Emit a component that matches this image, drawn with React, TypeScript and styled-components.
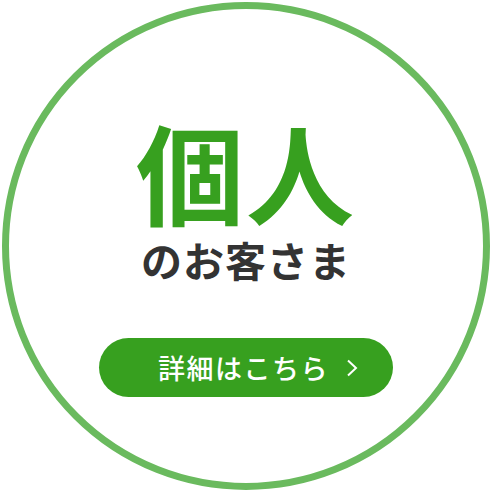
import styled, { createGlobalStyle } from 'styled-components';

const GlobalStyle = createGlobalStyle`
  html, body {
    margin: 0;
    padding: 0;
    background: #ffffff;
  }
  body {
    font-family: "Noto Sans CJK JP", "Noto Sans", sans-serif;
  }
`;

const Page = styled.div`
  width: 492px;
  height: 492px;
  display: flex;
  align-items: center;
  justify-content: center;
`;

const Circle = styled.div`
  box-sizing: border-box;
  width: 488px;
  height: 488px;
  border-radius: 50%;
  border: 7px solid #6aba5e;
  background: #ffffff;
  display: flex;
  flex-direction: column;
  align-items: center;
  padding-top: 107px;
`;

const Title = styled.h1`
  margin: 0;
  font-size: 108px;
  line-height: 1;
  font-weight: 700;
  color: #37a01f;
  letter-spacing: 2px;
`;

const Subtitle = styled.p`
  margin: 11px 0 0;
  font-size: 41px;
  line-height: 1.2;
  font-weight: 700;
  color: #333333;
  letter-spacing: 1px;
`;

const DetailButton = styled.a`
  margin-top: 54px;
  box-sizing: border-box;
  width: 294px;
  height: 59px;
  border-radius: 30px;
  background: #37a01f;
  color: #ffffff;
  display: flex;
  align-items: center;
  justify-content: center;
  gap: 17px;
  padding-left: 24px;
  text-decoration: none;
  font-size: 27px;
  font-weight: 500;
  letter-spacing: 1.5px;
`;

const Chevron = styled.svg`
  width: 12px;
  height: 18px;
`;

export default function App() {
  return (
    <>
      <GlobalStyle />
      <Page>
        <Circle>
          <Title>個人</Title>
          <Subtitle>のお客さま</Subtitle>
          <DetailButton href="#">
            詳細はこちら
            <Chevron viewBox="0 0 12 18">
              <path d="M2 1.5 L10 9 L2 16.5" fill="none" stroke="#ffffff" strokeWidth="2" />
            </Chevron>
          </DetailButton>
        </Circle>
      </Page>
    </>
  );
}
